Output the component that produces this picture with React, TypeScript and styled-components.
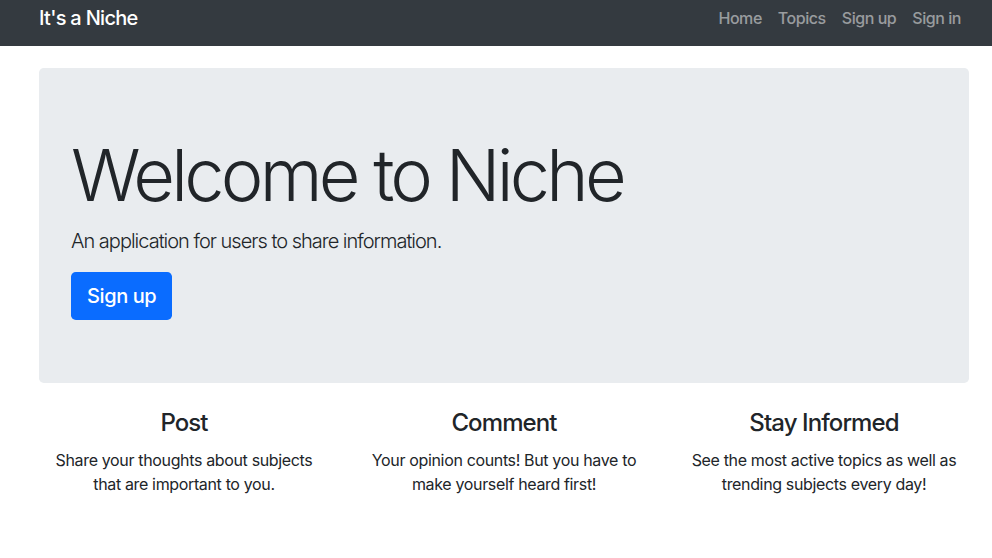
import React from "react";
import styled, { createGlobalStyle } from "styled-components";

const Global = createGlobalStyle`
  html, body { margin: 0; padding: 0; background: #fff; }
  body {
    font-family: Inter, "Helvetica Neue", Arial, sans-serif;
    color: #212529;
    font-size: 16px;
    line-height: 1.5;
    -webkit-font-smoothing: antialiased;
  }
  * { box-sizing: border-box; }
`;

const Page = styled.div`
  width: 1008px;
`;

const Navbar = styled.nav`
  background: #343a40;
  height: 46px;
`;

const NavInner = styled.div`
  width: 930px;
  margin: 0 auto;
  height: 100%;
  display: flex;
  align-items: center;
  justify-content: space-between;
`;

const Brand = styled.a`
  color: #fff;
  font-size: 20px;
  font-weight: 500;
  letter-spacing: -0.7px;
  text-decoration: none;
  line-height: 30px;
  margin-top: -10px;
`;

const NavList = styled.ul`
  display: flex;
  list-style: none;
  margin: -10px 0 0 0;
  padding: 0;
`;

const NavLink = styled.a`
  display: block;
  padding: 0 8px;
  color: rgba(255, 255, 255, 0.5);
  font-size: 16px;
  font-weight: 500;
  letter-spacing: -0.45px;
  text-decoration: none;
  line-height: 24px;
`;

const Container = styled.main`
  width: 930px;
  margin: 22px auto 0;
`;

const Jumbotron = styled.section`
  background: #e9ecef;
  border-radius: 4.8px;
  padding: 64px 32px 63px;
`;

const Display = styled.h1`
  margin: 0 0 8px;
  font-size: 72px;
  font-weight: 300;
  line-height: 1.2;
  letter-spacing: -3.75px;
`;

const Lead = styled.p`
  margin: 0 0 16px;
  font-size: 20px;
  font-weight: 300;
  line-height: 30px;
  letter-spacing: -1px;
`;

const PrimaryButton = styled.a`
  display: inline-block;
  background: #0a6cff;
  color: #fff;
  font-size: 20px;
  font-weight: 500;
  line-height: 30px;
  padding: 9px 16px;
  border-radius: 4.8px;
  text-decoration: none;
  letter-spacing: -0.4px;
`;

const Features = styled.div`
  display: grid;
  grid-template-columns: repeat(3, 1fr);
  margin: 26px -15px 0;
`;

const Feature = styled.div`
  padding: 0 18px;
  text-align: center;
`;

const FeatureTitle = styled.h4`
  margin: 0 0 10px;
  font-size: 24px;
  font-weight: 500;
  line-height: 1.2;
  letter-spacing: -0.9px;
`;

const FeatureText = styled.p`
  margin: 0;
  font-size: 16px;
  line-height: 24px;
  letter-spacing: -0.35px;
`;

const features = [
  { title: "Post", text: "Share your thoughts about subjects that are important to you." },
  { title: "Comment", text: "Your opinion counts! But you have to make yourself heard first!" },
  { title: "Stay Informed", text: "See the most active topics as well as trending subjects every day!" },
];

export default function App() {
  return (
    <Page>
      <Global />
      <Navbar>
        <NavInner>
          <Brand href="#">It's a Niche</Brand>
          <NavList>
            {["Home", "Topics", "Sign up", "Sign in"].map((l) => (
              <li key={l}>
                <NavLink href="#">{l}</NavLink>
              </li>
            ))}
          </NavList>
        </NavInner>
      </Navbar>
      <Container>
        <Jumbotron>
          <Display>Welcome to Niche</Display>
          <Lead>An application for users to share information.</Lead>
          <PrimaryButton href="#">Sign up</PrimaryButton>
        </Jumbotron>
        <Features>
          {features.map((f) => (
            <Feature key={f.title}>
              <FeatureTitle>{f.title}</FeatureTitle>
              <FeatureText>{f.text}</FeatureText>
            </Feature>
          ))}
        </Features>
      </Container>
    </Page>
  );
}
